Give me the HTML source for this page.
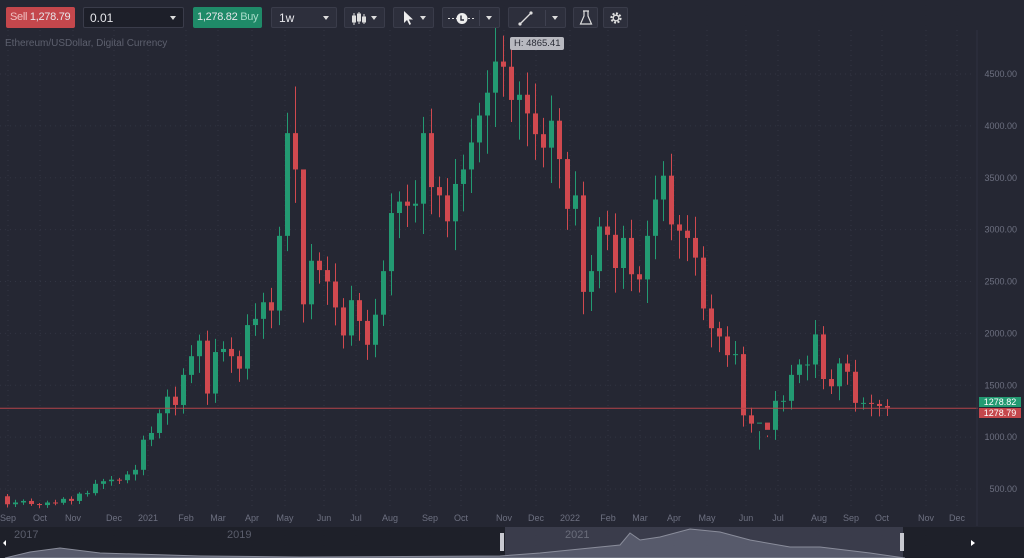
<!DOCTYPE html>
<html><head><meta charset="utf-8"><style>
body{margin:0;width:1024px;height:558px;background:#252733;overflow:hidden;font-family:"Liberation Sans",sans-serif;position:relative}
.b{position:absolute;top:7px;height:21px;border-radius:2px;font-size:12px;line-height:21px;color:#e6e6ea;box-sizing:border-box;white-space:nowrap;overflow:hidden}
.tb{background:#2d2f3c;border:1px solid #3a3c4a}
.car{position:absolute;right:7px;top:8px;width:0;height:0;border-left:3px solid transparent;border-right:3px solid transparent;border-top:4px solid #ddd}
</style></head><body>
<div class="b" style="left:6px;width:69px;background:#c4474c;padding-left:4px;font-size:11px;letter-spacing:-0.3px"><span style="color:#f0c0c2">Sell</span> 1,278.79</div>
<div class="b" style="left:83px;width:101px;background:#1d1f29;border:1px solid #3a3c4a;padding-left:6px">0.01<div class="car"></div></div>
<div class="b" style="left:193px;width:69px;background:#1f8a68;padding-left:4px;font-size:11px;letter-spacing:-0.3px">1,278.82 <span style="color:#a6dcc8">Buy</span></div>
<div class="b tb" style="left:271px;width:66px;padding-left:7px">1w<div class="car"></div></div>
<div class="b tb" style="left:344px;width:41px"><svg width="24" height="19" style="position:absolute;left:5px;top:1px"><g stroke="#ddd" fill="#ddd"><line x1="4" y1="4" x2="4" y2="16"/><rect x="2.5" y="7" width="3" height="6"/><line x1="9" y1="3" x2="9" y2="15"/><rect x="7.5" y="5" width="3" height="7"/><line x1="14" y1="5" x2="14" y2="15"/><rect x="12.5" y="8" width="3" height="5"/></g></svg><div class="car"></div></div>
<div class="b tb" style="left:393px;width:41px"><svg width="14" height="16" style="position:absolute;left:8px;top:2px"><path d="M2 1L2 13L5 10L7.5 15L9 14L6.8 9.5L11 9.5Z" fill="#eee"/></svg><div class="car"></div></div>
<div class="b tb" style="left:442px;width:58px"><svg width="30" height="19" style="position:absolute;left:4px;top:1px"><line x1="1" y1="9.5" x2="29" y2="9.5" stroke="#ddd" stroke-dasharray="2 2"/><circle cx="15" cy="9.5" r="5.5" fill="#eee"/><path d="M14 6.5V11H17" stroke="#2d2f3c" stroke-width="1.4" fill="none"/></svg><div style="position:absolute;left:36px;top:2px;width:1px;height:16px;background:#3f4150"></div><div class="car"></div></div>
<div class="b tb" style="left:508px;width:58px"><svg width="18" height="19" style="position:absolute;left:8px;top:1px"><line x1="3" y1="15" x2="14" y2="4" stroke="#ddd" stroke-width="1.3"/><circle cx="3" cy="15" r="1.6" fill="#ddd"/><circle cx="14" cy="4" r="1.6" fill="#ddd"/></svg><div style="position:absolute;left:36px;top:2px;width:1px;height:16px;background:#3f4150"></div><div class="car"></div></div>
<div class="b tb" style="left:573px;width:25px"><svg width="14" height="17" style="position:absolute;left:5px;top:1px"><path d="M5 2V7L1.5 15H12.5L9 7V2M4 2H10" stroke="#ddd" fill="none" stroke-width="1.2"/></svg></div>
<div class="b tb" style="left:603px;width:25px"><svg width="14" height="14" style="position:absolute;left:5px;top:3px"><circle cx="7" cy="7" r="4.5" fill="none" stroke="#ddd" stroke-width="2.2" stroke-dasharray="2 1.5"/><circle cx="7" cy="7" r="2.8" fill="none" stroke="#ddd" stroke-width="1.3"/></svg></div>
<div style="position:absolute;left:5px;top:38px;font-size:10px;color:#5d606e">Ethereum/USDollar, Digital Currency</div>
<svg id="c" width="1024" height="558" style="position:absolute;left:0;top:0"></svg>
<div style="position:absolute;left:510px;top:37px;background:#b8b9c0;color:#2a2c36;font-size:9.5px;padding:1px 4px;border-radius:2px">H: 4865.41</div>
<script>
var s='',Y=function(p){return 74+(4500-p)*0.10375};
var months=[[8,'Sep'],[40,'Oct'],[73,'Nov'],[114,'Dec'],[148,'2021'],[186,'Feb'],[218,'Mar'],[252,'Apr'],[285,'May'],[324,'Jun'],[356,'Jul'],[390,'Aug'],[430,'Sep'],[461,'Oct'],[504,'Nov'],[536,'Dec'],[570,'2022'],[608,'Feb'],[640,'Mar'],[674,'Apr'],[707,'May'],[746,'Jun'],[778,'Jul'],[819,'Aug'],[851,'Sep'],[882,'Oct'],[926,'Nov'],[957,'Dec']];
months.forEach(function(m){s+='<line x1="'+m[0]+'" y1="30" x2="'+m[0]+'" y2="510" stroke="#323543" stroke-dasharray="1 4"/><text x="'+m[0]+'" y="521" fill="#6d7080" font-size="9" text-anchor="middle">'+m[1]+'</text>';});
for(var p=500;p<=4500;p+=500){var y=Y(p);s+='<line x1="0" y1="'+y+'" x2="975" y2="'+y+'" stroke="#323543" stroke-dasharray="1 4"/><text x="1017" y="'+(y+3)+'" fill="#6d7080" font-size="9" text-anchor="end">'+p+'.00</text>';}
var C=[430,353,370,385,355,345,370,367,405,385,455,460,550,575,590,585,640,685,975,1040,1230,1390,1310,1600,1780,1930,1420,1820,1850,1780,1660,2080,2140,2300,2220,2940,3930,3580,2280,2700,2610,2500,2250,1980,2320,2120,1890,2180,2600,3160,3270,3230,3250,3930,3410,3330,3080,3440,3580,3840,4100,4320,4620,4570,4250,4300,4120,3920,3790,4050,3680,3200,3330,2400,2600,3030,2950,2630,2920,2570,2520,2940,3290,3520,3050,2990,2920,2730,2240,2050,1970,1790,1800,1210,1130,1140,1070,1350,1350,1600,1700,1700,1990,1560,1490,1710,1630,1330,1330,1320,1300,1285];
var H={63:4870,37:4380,38:3500,71:3750,96:1000,95:880};
for(var i=1;i<C.length;i++){var o=C[i-1],c=C[i],x=5+(i-1)*8,up=c>=o,col=up?'#239a72':'#d0494f';
var hi=H[i]||Math.max(o,c)*(1.03+0.04*((i*7)%5)/4),lo=Math.min(o,c)*(0.95-0.04*((i*3)%4)/3);
var y1=Y(Math.max(o,c)),y2=Y(Math.min(o,c));if(y2-y1<1)y2=y1+1;
s+='<line x1="'+(x+2.5)+'" y1="'+Y(hi)+'" x2="'+(x+2.5)+'" y2="'+Y(lo)+'" stroke="'+col+'"/><rect x="'+x+'" y="'+y1+'" width="5" height="'+(y2-y1)+'" fill="'+col+'"/>';}
s+='<line x1="0" y1="'+Y(1278.8)+'" x2="978" y2="'+Y(1278.8)+'" stroke="#b4444a"/>';
s+='<rect x="979" y="397" width="42" height="10" fill="#239a72"/><text x="1000" y="405" fill="#fff" font-size="9" text-anchor="middle">1278.82</text><rect x="979" y="408" width="42" height="10" fill="#c4474c"/><text x="1000" y="416" fill="#fff" font-size="9" text-anchor="middle">1278.79</text>';
s+='<line x1="977" y1="30" x2="977" y2="526" stroke="#2f3240"/>';
s+='<rect x="0" y="527" width="1024" height="31" fill="#1e2029"/><rect x="505" y="527" width="398" height="31" fill="#3a3c4b"/>';
s+='<polygon points="5,558 30,552 60,548 100,553 200,556 300,557 500,556 540,553 590,548 620,545 630,533 640,540 660,537 690,529 720,532 750,540 790,547 820,547 870,553 905,558" fill="#575a6b" stroke="#8a8d9b"/>';
s+='<text x="14" y="538" fill="#5a5d6b" font-size="11">2017</text><text x="227" y="538" fill="#5a5d6b" font-size="11">2019</text><text x="565" y="538" fill="#6a6d7b" font-size="11">2021</text>';
s+='<rect x="500" y="533" width="4" height="18" fill="#c8c9d0"/><rect x="900" y="533" width="4" height="18" fill="#c8c9d0"/><polygon points="6,540 3,543 6,546" fill="#fff"/><polygon points="971,540 975,543 971,546" fill="#fff"/>';
document.getElementById('c').innerHTML=s;
</script>
</body></html>
